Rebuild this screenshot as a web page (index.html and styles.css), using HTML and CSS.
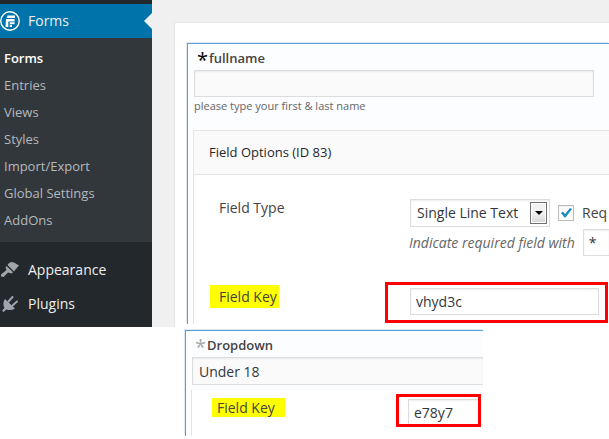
FILE: index.html
```html
<!DOCTYPE html>
<html lang="en">
<head>
    <meta charset="UTF-8">
    <meta name="viewport" content="width=device-width, initial-scale=1.0">
    <title>Forms</title>
    <link rel="stylesheet" href="styles.css">
</head>
<body>

    <div class="admin">
        <!-- Admin menu -->
        <nav class="sidebar">
            <a class="menu-item current" href="#">
                <svg class="menu-icon" viewBox="0 0 20 20" aria-hidden="true">
                    <circle cx="10" cy="10" r="9.200" fill="none" stroke="#fff" stroke-width="1.400"/>
                    <path fill="#fff" d="M7.500 4.500H15V7H6.700zM6 8h8.500v5.500H12V16H9.500v-2.500V11H8.500v5H5.500z"/>
                    <path stroke="#0073aa" stroke-width="0.800" d="M8.500 10.800h6M9.500 13.600h5M9 11v5"/>
                </svg>
                Forms
            </a>
            <ul class="submenu">
                <li><a class="active" href="#">Forms</a></li>
                <li><a href="#">Entries</a></li>
                <li><a href="#">Views</a></li>
                <li><a href="#">Styles</a></li>
                <li><a href="#">Import/Export</a></li>
                <li><a href="#">Global Settings</a></li>
                <li><a href="#">AddOns</a></li>
            </ul>
            <a class="menu-item" href="#">
                <svg class="menu-icon" viewBox="0 0 20 20" aria-hidden="true">
                    <path fill="#a0a5aa" d="M8.500 3.500L11 2L14 2.500L19 5.500L15.500 9.500L14 11.500L7.500 5zM6.500 6L13 12.200L11.500 13.500L8 12.500L3.500 17L1 16.500V14.500L6.500 10L5.500 7.500z"/>
                </svg>
                Appearance
            </a>
            <a class="menu-item" href="#">
                <svg class="menu-icon" viewBox="0 0 20 20" aria-hidden="true">
                    <path fill="#a0a5aa" d="M5 5L15 14.500Q11 17 6.500 15.500L3.500 18L2 16.500L4.500 14Q2 9 5 5z"/>
                    <path fill="none" stroke="#a0a5aa" stroke-width="2" stroke-linecap="round" d="M8.500 7.500L12.500 3M12.500 11.500L17 7.500"/>
                </svg>
                Plugins
            </a>
        </nav>

        <!-- Form builder -->
        <main class="builder">
            <div class="card">
                <section class="field">
                    <label class="field-label" for="fullname"><span class="star required">*</span>fullname</label>
                    <input class="preview" id="fullname" type="text">
                    <p class="help">please type your first &amp; last name</p>

                    <div class="options">
                        <h3 class="options-title">Field Options (ID 83)</h3>
                        <div class="options-body">
                            <label class="option-name" for="type">Field Type</label>
                            <div class="option-type">
                                <div class="type-row">
                                    <span class="select">
                                        <select id="type"><option>Single Line Text</option></select>
                                        <span class="arrow"></span>
                                    </span>
                                    <label class="check">
                                        <input type="checkbox" checked>
                                        <svg viewBox="0 0 16 16" aria-hidden="true"><path fill="#1e8cbe" d="M3 8L5 6.500L7 9L12 3L14 4L7.500 12.500H6.500z"/></svg>
                                        Req
                                    </label>
                                </div>
                                <div class="type-row">
                                    <label class="hint" for="indicator">Indicate required field with</label>
                                    <input class="indicator" id="indicator" type="text" value="*">
                                </div>
                            </div>
                            <label class="option-name" for="key"><mark>Field Key</mark></label>
                            <div class="outline">
                                <input id="key" type="text" value="vhyd3c">
                            </div>
                        </div>
                    </div>
                </section>
            </div>
        </main>
    </div>

    <!-- Dropdown field -->
    <section class="field dropdown-field">
        <label class="field-label" for="age"><span class="star">*</span>Dropdown</label>
        <select class="preview" id="age"><option>Under 18</option></select>
        <div class="dropdown-body">
            <label class="option-name" for="dropdown-key"><mark>Field Key</mark></label>
            <div class="outline">
                <input id="dropdown-key" type="text" value="e78y7">
            </div>
        </div>
    </section>

</body>
</html>
```

FILE: styles.css
```css
* {
    margin: 0;
    padding: 0;
    box-sizing: border-box;
}

body {
    font-family: "Open Sans", "Noto Sans", sans-serif;
    font-size: 14px;
    line-height: 20px;
    color: #444;
    background: #fff;
}

input,
select {
    height: 27px;
    padding: 0 5px;
    border: 1px solid #ddd;
    border-radius: 0;
    background: #fff;
    box-shadow: inset 0 1px 2px rgba(0, 0, 0, 0.07);
    font: inherit;
    color: #32373c;
    appearance: none;
}

.admin {
    display: flex;
}

/* --- Sidebar --- */
.sidebar {
    flex: 0 0 152px;
    padding: 4px 0 6px;
    background: #23282d;
}

.sidebar a {
    color: #eee;
    text-decoration: none;
}

.menu-item {
    display: flex;
    align-items: center;
    gap: 8px;
    height: 34px;
}

.menu-icon {
    width: 20px;
    height: 20px;
}

.menu-item.current {
    position: relative;
    background: #0073aa;
}

.menu-item.current::after {
    content: "";
    position: absolute;
    top: 9px;
    right: 0;
    border: 8px solid transparent;
    border-left-width: 0;
    border-right-color: #f0f0f0;
}

.submenu {
    margin-bottom: 11px;
    padding: 7px 0 8px;
    background: #32373c;
    list-style: none;
    font-size: 13px;
    line-height: 27px;
}

.submenu a {
    display: block;
    padding-left: 4px;
    color: #b4b9be;
}

.submenu .active {
    color: #fff;
    font-weight: 600;
}

/* --- Form builder --- */
.builder {
    flex: 1;
    min-width: 0;
    padding: 22px 0 0 22px;
    background: #f0f0f0;
}

.card {
    height: 100%;
    padding: 20px 0 0 12px;
    border: 1px solid #e5e5e5;
    border-width: 1px 0 0 1px;
    background: #fff;
}

.field {
    padding: 4px 0 0 5px;
    border: 1px solid #5b9dd9;
    border-width: 1px 0 0 1px;
    background: #fcfdff;
    box-shadow: -1px -1px 0 #dfe9f2;
}

.field-label {
    display: flex;
    align-items: center;
    height: 20px;
    margin-bottom: 2px;
    padding-left: 4px;
    font-size: 13px;
    font-weight: 600;
}

.star {
    width: 12px;
    height: 20px;
    color: #aaa;
    font-size: 20px;
    font-weight: 400;
    line-height: 24px;
}

.star.required {
    color: #000;
}

.preview {
    display: block;
    width: calc(100% - 16px);
    margin-left: 1px;
    background: #fafafa;
}

.help {
    padding-left: 1px;
    color: #666;
    font-size: 11px;
    line-height: 18px;
}

.options {
    margin-top: 15px;
    border: 1px solid #e5e5e5;
    border-width: 1px 0 0 1px;
    background: #fff;
}

.options-title {
    padding: 0 15px;
    border-bottom: 1px solid #e5e5e5;
    background: #fafafa;
    color: #23282d;
    font-size: 13px;
    font-weight: 400;
    line-height: 43px;
}

.options-body {
    display: grid;
    grid-template-columns: 191px minmax(0, 1fr);
    row-gap: 26px;
    padding: 24px 0 1px 25px;
}

.option-name {
    line-height: 18px;
}

mark {
    display: block;
    width: fit-content;
    margin: 3px 0 0 -9px;
    padding: 0 2px 0 9px;
    background: #ff0;
    color: inherit;
    line-height: 23px;
}

.option-type {
    display: grid;
    grid-template-columns: minmax(0, 1fr);
    gap: 2px;
}

.type-row {
    display: flex;
    align-items: center;
    gap: 8px;
    white-space: nowrap;
}

.select {
    position: relative;
    flex: 0 0 140px;
}

.select select {
    display: block;
    width: 100%;
    height: 28px;
    padding: 0 6px;
}

.arrow {
    position: absolute;
    top: 3px;
    right: 3px;
    width: 17px;
    height: 22px;
    border: 1px solid #707070;
    background: linear-gradient(#f2f2f2 50%, #d4d4d4);
    box-shadow: inset 0 0 0 1px #fff;
    pointer-events: none;
}

.arrow::after {
    content: "";
    position: absolute;
    top: 8px;
    left: 4px;
    border: 4px solid transparent;
    border-top-color: #000;
    border-bottom-width: 0;
}

.check {
    display: flex;
    align-items: center;
    gap: 8px;
    position: relative;
}

.check input {
    width: 16px;
    height: 16px;
    padding: 0;
    border-color: #bbb;
}

.check svg {
    position: absolute;
    left: 0;
    width: 16px;
    height: 16px;
}

.hint {
    margin-left: -1px;
    color: #666;
    font-style: italic;
}

.indicator {
    flex: 1;
    min-width: 0;
    border-right: 0;
}

.outline {
    margin: 0 1px 0 -25px;
    padding: 3px 6px 5px 22px;
    border: 3px solid #f00;
}

.outline input {
    display: block;
    width: 100%;
}

/* --- Dropdown field --- */
.dropdown-field {
    width: 298px;
    margin: 3px 0 0 185px;
}

.dropdown-field .preview {
    width: calc(100% - 1px);
    height: 28px;
    padding: 1px 6px 0;
    border-right: 0;
}

.dropdown-body {
    display: grid;
    grid-template-columns: 204px minmax(0, 1fr);
    margin-top: 5px;
    padding-top: 4px;
    border-left: 1px solid #e5e5e5;
    background: #fff;
}

.dropdown-body .option-name {
    padding: 4px 0 0 25px;
}

.dropdown-body mark {
    margin: 0 0 0 -5px;
    padding: 0 10px 0 5px;
    line-height: 19px;
}

.dropdown-body .outline {
    margin: 0 2px 9px 0;
    padding: 2px 0 0 9px;
}

.dropdown-body .outline input {
    height: 25px;
    border-width: 1px 0 0 1px;
}
```
